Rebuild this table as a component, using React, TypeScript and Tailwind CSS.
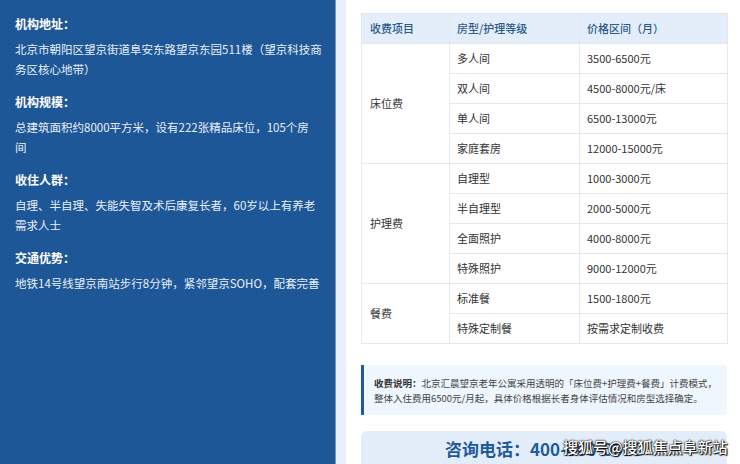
import React from "react";

const sections = [
  { label: "机构地址：", lines: ["北京市朝阳区望京街道阜安东路望京东园511楼（望京科技商", "务区核心地带）"] },
  { label: "机构规模：", lines: ["总建筑面积约8000平方米，设有222张精品床位，105个房", "间"] },
  { label: "收住人群：", lines: ["自理、半自理、失能失智及术后康复长者，60岁以上有养老", "需求人士"] },
  { label: "交通优势：", lines: ["地铁14号线望京南站步行8分钟，紧邻望京SOHO，配套完善"] },
];

const groups = [
  {
    name: "床位费",
    rows: [
      ["多人间", "3500-6500元"],
      ["双人间", "4500-8000元/床"],
      ["单人间", "6500-13000元"],
      ["家庭套房", "12000-15000元"],
    ],
  },
  {
    name: "护理费",
    rows: [
      ["自理型", "1000-3000元"],
      ["半自理型", "2000-5000元"],
      ["全面照护", "4000-8000元"],
      ["特殊照护", "9000-12000元"],
    ],
  },
  {
    name: "餐费",
    rows: [
      ["标准餐", "1500-1800元"],
      ["特殊定制餐", "按需求定制收费"],
    ],
  },
];

export default function App() {
  return (
    <div className="relative flex h-[464px] w-[740px] overflow-hidden bg-white font-['Noto_Sans_CJK_SC',sans-serif]">
      {/* Left panel */}
      <div className="w-[335px] shrink-0 bg-[#1e5798] px-[15px] pt-[15px]">
        <div className="flex flex-col gap-[14px]">
          {sections.map((s) => (
            <div key={s.label}>
              <div className="text-[12px] font-bold leading-[18px] text-white">{s.label}</div>
              <div className="mt-[6px] text-[11.5px] leading-[20px] text-[#e9eff7]">
                {s.lines.map((l) => (
                  <div key={l} className="whitespace-nowrap">{l}</div>
                ))}
              </div>
            </div>
          ))}
        </div>
      </div>
      <div className="w-[1px] shrink-0 bg-[#6f97c4]" />
      <div className="w-[10px] shrink-0 bg-[#e8f1fb]" />

      {/* Right content */}
      <div className="flex-1 pl-[15px] pt-[13px]">
        <table className="w-[366px] table-fixed border-collapse text-[11px]">
          <colgroup>
            <col className="w-[88px]" />
            <col className="w-[130px]" />
            <col className="w-[148px]" />
          </colgroup>
          <thead>
            <tr className="h-[30px] bg-[#e3eefa]">
              <th className="border border-[#e3e6ea] pl-[8px] text-left font-medium text-[#2d5a8c]">收费项目</th>
              <th className="border border-[#e3e6ea] pl-[7px] text-left font-medium text-[#2d5a8c]">房型/护理等级</th>
              <th className="border border-[#e3e6ea] pl-[7px] text-left font-medium text-[#2d5a8c]">价格区间（月）</th>
            </tr>
          </thead>
          <tbody>
            {groups.map((g) =>
              g.rows.map((r, i) => (
                <tr key={g.name + r[0]} className="h-[30px]">
                  {i === 0 && (
                    <td rowSpan={g.rows.length} className="border border-[#e6e8eb] pl-[8px] text-[#333]">
                      {g.name}
                    </td>
                  )}
                  <td className="border border-[#e6e8eb] pl-[7px] text-[#333]">{r[0]}</td>
                  <td className="border border-[#e6e8eb] pl-[7px] text-[#333]">{r[1]}</td>
                </tr>
              ))
            )}
          </tbody>
        </table>

        <div className="mt-[21px] w-[366px] rounded-r-[4px] border-l-[3px] border-[#1f5aa0] bg-[#eef6fe] pb-[10px] pl-[10px] pr-[6px] pt-[11px] text-[9.5px] leading-[14.5px] text-[#444]">
          <div className="whitespace-nowrap">
            <span className="font-bold text-[#333]">收费说明：</span>
            北京汇晨望京老年公寓采用透明的「床位费+护理费+餐费」计费模式，
          </div>
          <div className="whitespace-nowrap">整体入住费用6500元/月起，具体价格根据长者身体评估情况和房型选择确定。</div>
        </div>

        <div className="mt-[16px] w-[366px] rounded-[6px] bg-[#e3edf9] pb-[14px] pt-[8px] text-center text-[17px] font-bold leading-[20px] text-[#1f5a9c]">
          咨询电话：400-000-0000
        </div>
      </div>

      {/* Watermark overlay */}
      <div className="absolute left-[563px] top-[438px] whitespace-nowrap text-[15px] font-medium leading-[18px] text-white [text-shadow:0_0_2px_#000,0_0_1px_#000,1px_1px_1px_#000]">
        搜狐号@搜狐焦点阜新站
      </div>
    </div>
  );
}
